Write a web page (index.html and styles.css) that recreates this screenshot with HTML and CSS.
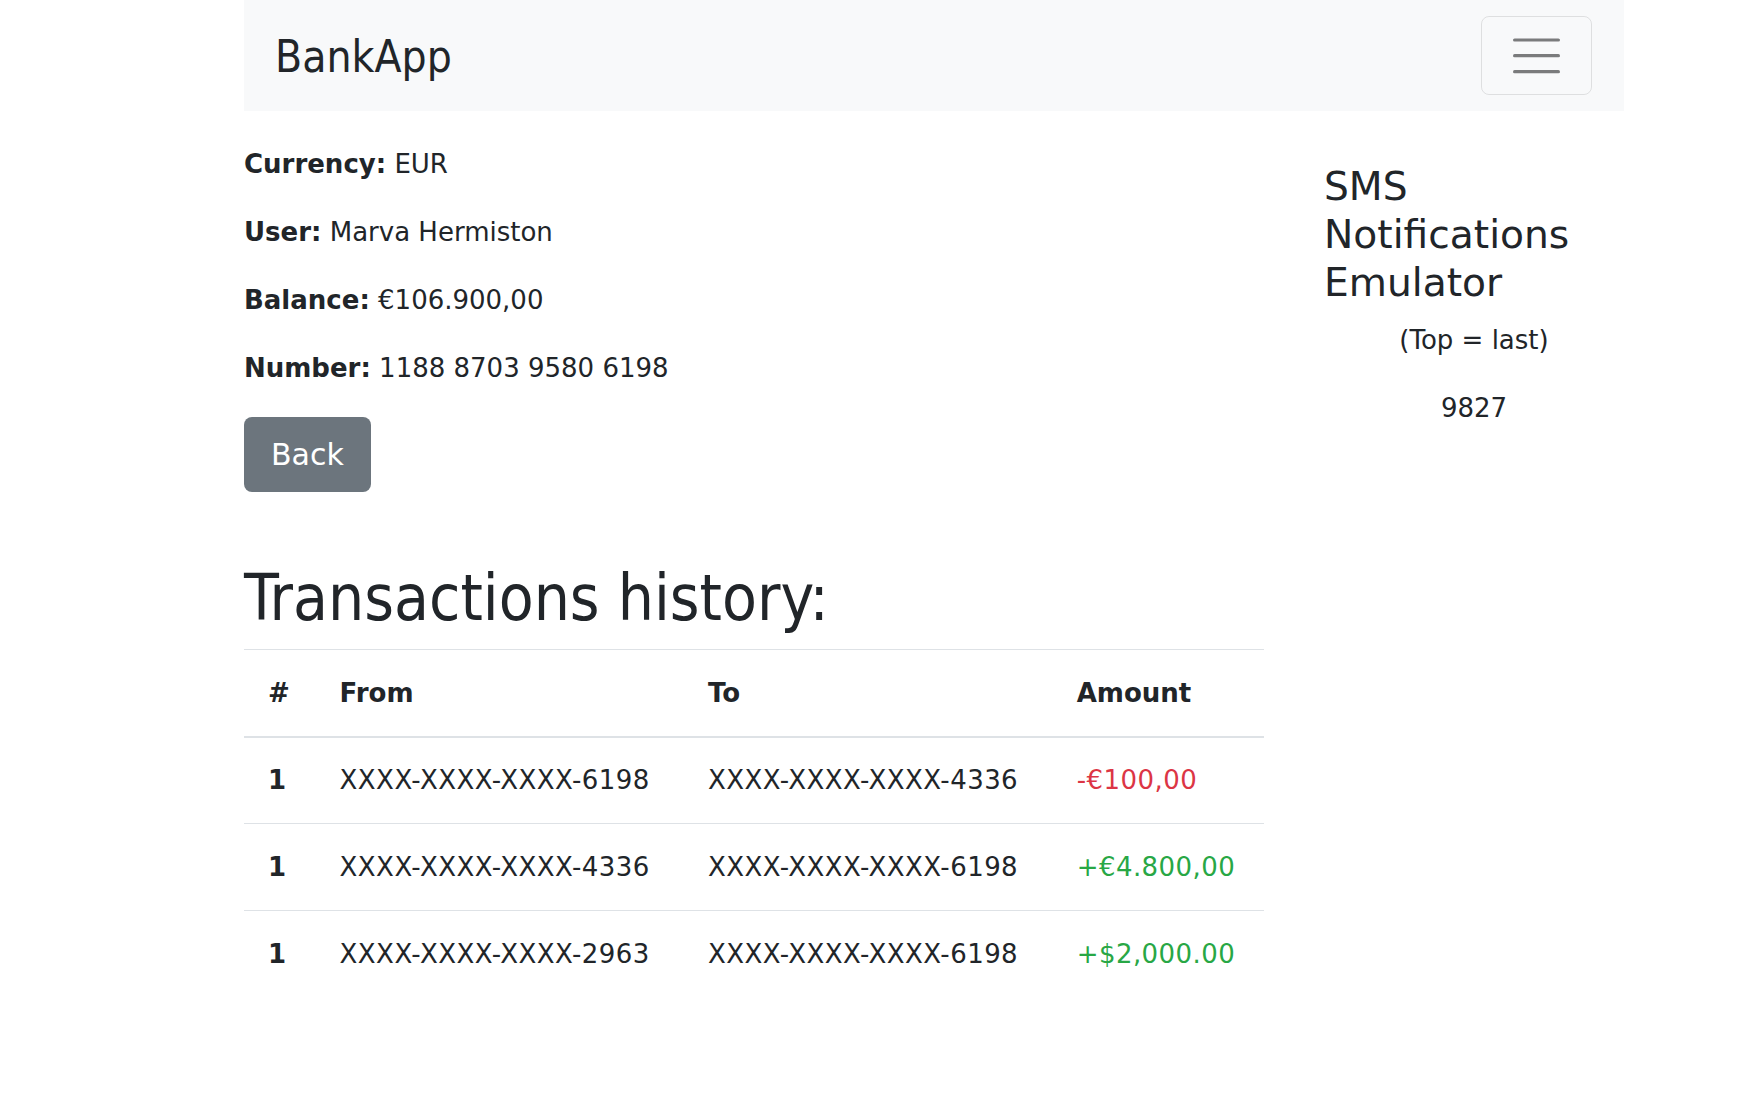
FILE: index.html
```html
<!DOCTYPE html>
<html lang="en">
<head>
<meta charset="utf-8">
<title>BankApp</title>
<link rel="stylesheet" href="styles.css">
</head>
<body>
<div class="container">
  <nav class="navbar">
    <span class="brand">BankApp</span>
    <button class="toggler" type="button" aria-label="Toggle navigation">
      <svg width="47" height="36" viewBox="0 0 47 36">
        <g stroke="#7a7b7c" stroke-width="3.2" stroke-linecap="round">
          <line x1="1.6" y1="2" x2="45.4" y2="2"/>
          <line x1="1.6" y1="17.7" x2="45.4" y2="17.7"/>
          <line x1="1.6" y1="33.7" x2="45.4" y2="33.7"/>
        </g>
      </svg>
    </button>
  </nav>
  <div class="layout">
    <main class="main">
      <p><b>Currency:</b> EUR</p>
      <p><b>User:</b> Marva Hermiston</p>
      <p><b>Balance:</b> €106.900,00</p>
      <p><b>Number:</b> 1188 8703 9580 6198</p>
      <div><button class="btn" type="button">Back</button></div>
      <h1 class="title">Transactions history:</h1>
      <table class="table">
        <thead>
          <tr>
            <th class="c-num">#</th>
            <th class="c-from">From</th>
            <th class="c-to">To</th>
            <th class="c-amt">Amount</th>
          </tr>
        </thead>
        <tbody>
          <tr>
            <td class="bold">1</td>
            <td>XXXX-XXXX-XXXX-6198</td>
            <td>XXXX-XXXX-XXXX-4336</td>
            <td class="neg">-€100,00</td>
          </tr>
          <tr>
            <td class="bold">1</td>
            <td>XXXX-XXXX-XXXX-4336</td>
            <td>XXXX-XXXX-XXXX-6198</td>
            <td class="pos">+€4.800,00</td>
          </tr>
          <tr>
            <td class="bold">1</td>
            <td>XXXX-XXXX-XXXX-2963</td>
            <td>XXXX-XXXX-XXXX-6198</td>
            <td class="pos">+$2,000.00</td>
          </tr>
        </tbody>
      </table>
    </main>
    <aside class="sidebar">
      <h3 class="sms-title">SMS Notifications Emulator</h3>
      <p>(Top = last)</p>
      <p>9827</p>
    </aside>
  </div>
</div>
</body>
</html>
```
FILE: styles.css
```css
html, body {
  margin: 0;
  padding: 0;
  background: #ffffff;
}

body {
  font-family: "DejaVu Sans", Verdana, sans-serif;
  font-size: 26px;
  line-height: 38.7px;
  color: #212529;
}

.container {
  width: 1380px;
  margin-left: 244px;
}

.navbar {
  height: 111px;
  background: #f8f9fa;
  display: flex;
  align-items: center;
  justify-content: space-between;
  padding: 0 32px 0 31px;
  box-sizing: border-box;
}

.brand {
  font-family: "DejaVu Sans Condensed", "DejaVu Sans", sans-serif;
  font-stretch: condensed;
  font-size: 44px;
  line-height: 53px;
  color: #212529;
  margin-top: 1px;
}

.toggler {
  width: 111px;
  height: 79px;
  box-sizing: border-box;
  border: 1px solid rgba(0, 0, 0, 0.1);
  border-radius: 8px;
  background: transparent;
  display: flex;
  align-items: center;
  justify-content: center;
  padding: 0;
  margin-top: 0;
}

.toggler svg {
  display: block;
}

.layout {
  display: grid;
  grid-template-columns: 1020px 300px;
  column-gap: 60px;
  align-items: start;
}

.main {
  padding-top: 34px;
}

.main p,
.sidebar p {
  margin: 0 0 29.3px;
}

.btn {
  font-family: "DejaVu Sans", Verdana, sans-serif;
  font-size: 30px;
  line-height: 45px;
  padding: 15px 27px;
  border: none;
  border-radius: 8px;
  background: #6c757d;
  color: #ffffff;
  display: inline-block;
  vertical-align: top;
}

.title {
  font-family: "DejaVu Sans Condensed", "DejaVu Sans", sans-serif;
  font-stretch: condensed;
  font-weight: 400;
  font-size: 63.5px;
  line-height: 72px;
  margin: 70px 0 15px;
}

.table {
  width: 1020px;
  table-layout: fixed;
  border-collapse: collapse;
}

.table th,
.table td {
  padding: 23.5px 24px;
  text-align: left;
  vertical-align: top;
  line-height: 38.7px;
  white-space: nowrap;
}

.table td {
  letter-spacing: 0.45px;
}

.table thead th {
  font-weight: 700;
  border-top: 1px solid #dee2e6;
  border-bottom: 2px solid #dee2e6;
}

.table tbody td {
  border-top: 1px solid #dee2e6;
}

.table tbody tr:first-child td {
  border-top: none;
}

.c-num { width: 23.6px; }
.c-from { width: 320.4px; }
.c-to { width: 320.7px; }
.c-amt { width: 163.3px; }

.bold { font-weight: 700; }
.neg { color: #dc3545; }
.pos { color: #28a745; }

.sidebar {
  padding-top: 52px;
}

.sms-title {
  font-weight: 400;
  font-size: 39.2px;
  line-height: 48px;
  margin: 0 0 13.5px;
}

.sidebar p {
  text-align: center;
}
```
